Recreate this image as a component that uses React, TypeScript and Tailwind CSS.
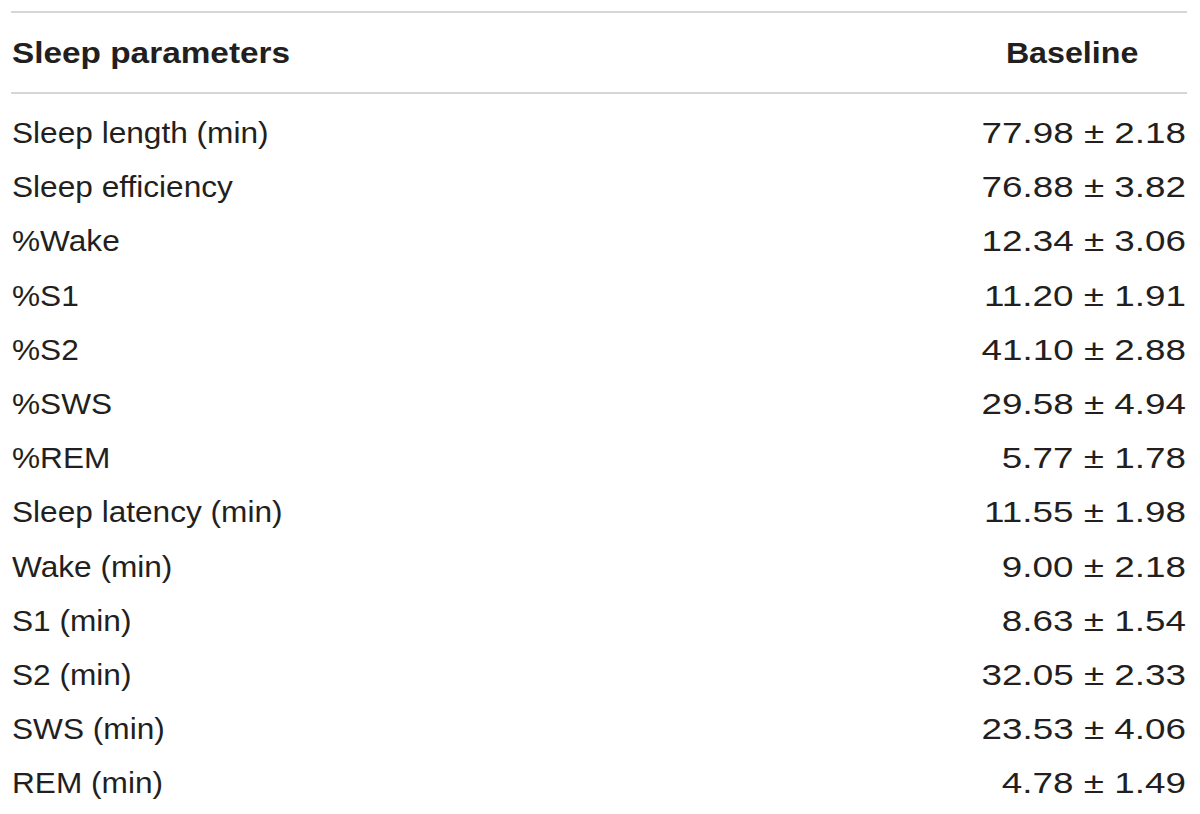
const rows: [string, string][] = [
  ["Sleep length (min)", "77.98 ± 2.18"],
  ["Sleep efficiency", "76.88 ± 3.82"],
  ["%Wake", "12.34 ± 3.06"],
  ["%S1", "11.20 ± 1.91"],
  ["%S2", "41.10 ± 2.88"],
  ["%SWS", "29.58 ± 4.94"],
  ["%REM", "5.77 ± 1.78"],
  ["Sleep latency (min)", "11.55 ± 1.98"],
  ["Wake (min)", "9.00 ± 2.18"],
  ["S1 (min)", "8.63 ± 1.54"],
  ["S2 (min)", "32.05 ± 2.33"],
  ["SWS (min)", "23.53 ± 4.06"],
  ["REM (min)", "4.78 ± 1.49"],
];

export default function App() {
  return (
    <div className="h-[814px] w-[1200px] overflow-hidden bg-white pt-[11px] pl-[11px] font-['Liberation_Sans',Arial,sans-serif] text-[29px] text-[#231f20]">
      <div className="w-[1176px]">
        {/* header */}
        <div className="flex h-[83px] items-start justify-between border-y-2 border-[#d6d6d6] pt-[13px] font-bold leading-[54px]">
          <span className="ml-px inline-block origin-left scale-x-[1.15]">Sleep parameters</span>
          <span className="mr-[49px] inline-block origin-right scale-x-[1.11]">Baseline</span>
        </div>

        {/* body */}
        <div className="pt-[12px] leading-[54.2px]">
          {rows.map(([label, value]) => (
            <div key={label} className="flex h-[54.2px] items-start justify-between">
              <span className="ml-px inline-block origin-left scale-x-[1.09]">{label}</span>
              <span className="mr-px inline-block origin-right scale-x-[1.27]">{value}</span>
            </div>
          ))}
        </div>
      </div>
    </div>
  );
}
